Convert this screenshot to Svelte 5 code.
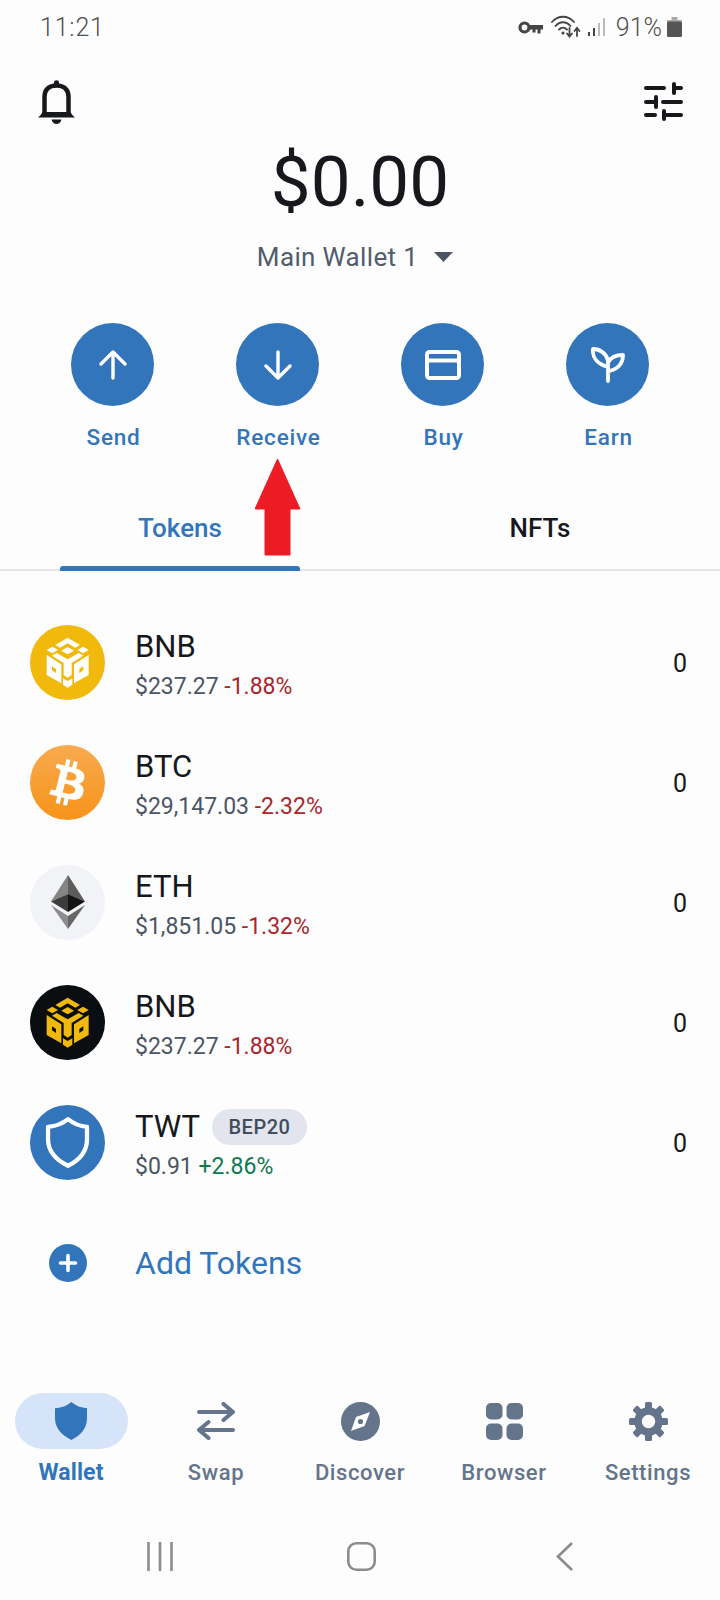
<script>
  const tokens = [
    { sym: 'BNB', icon: 'bnb', price: '$237.27', change: '-1.88%', up: false },
    { sym: 'BTC', icon: 'btc', price: '$29,147.03', change: '-2.32%', up: false },
    { sym: 'ETH', icon: 'eth', price: '$1,851.05', change: '-1.32%', up: false },
    { sym: 'BNB', icon: 'bnbdark', price: '$237.27', change: '-1.88%', up: false },
    { sym: 'TWT', icon: 'twt', price: '$0.91', change: '+2.86%', up: true, chip: 'BEP20' }
  ];
  const actions = ['Send', 'Receive', 'Buy', 'Earn'];
  const teeth = [0, 45, 90, 135, 180, 225, 270, 315];
  const shield = 'M38 13C44 18 50 20.500 58 21V34C58 47 50 56 38 62C26 56 17 47 17 34V21C26 20.500 32 18 38 13Z';
</script>

{#snippet cube(bg, fg)}
  <circle cx="37.500" cy="37.500" r="37.500" fill={bg} />
  <g transform="scale(.3333)" fill={fg}>
    <polygon points="113,38 150,60 136,68 113,55 90,68 76,60" />
    <polygon points="113,66 132,77 113,88 94,77" />
    <polygon points="67,65 84,75 67,85 50,75" />
    <polygon points="159,65 176,75 159,85 142,75" />
    <polygon points="80,84 113,103 146,84 160,92 125,114 125,150 113,158 101,150 101,114 66,92" />
    <path fill-rule="evenodd" d="M50 90L94 118V175L50 150ZM66 124L78 132V144L66 136Z" />
    <path fill-rule="evenodd" d="M176 90L132 118V175L176 150ZM160 124L148 132V144L160 136Z" />
    <polygon points="99,160 113,168 127,160 127,179 113,188 99,179" />
  </g>
{/snippet}

<div class="app">
  <header class="status">
    <span class="clock">11:21</span>
    <div class="status-right">
      <svg class="s-key" width="25" height="13" viewBox="0 0 25 13">
        <circle cx="6.500" cy="6.500" r="4.500" fill="none" stroke="#444" stroke-width="3.200" />
        <path d="M10 4H25V8.500H22.500V12.500H19.500V8.500H17.500V11.500H14.500V8.500H10Z" fill="#444" />
      </svg>
      <svg class="s-wifi" width="30" height="23" viewBox="0 0 30 23">
        <g fill="none" stroke="#444" stroke-width="1.800" stroke-linecap="round">
          <path d="M1 7C7 0 17 0 23 7" />
          <path d="M4.500 11C9 6 15 6 19.500 11" />
          <path d="M8 14.500C10.500 12 13.500 12 16 14.500" />
          <path d="M18.500 13V21M16 18.500L18.500 21.500L21 18.500" />
          <path d="M26 21V13.500M23.500 16L26 13L28.500 16" />
        </g>
        <circle cx="12" cy="18" r="1.600" fill="#444" />
      </svg>
      <svg class="s-sig" width="17" height="18" viewBox="0 0 17 18">
        <rect x="0" y="14" width="2" height="4" fill="#444" />
        <rect x="5" y="10" width="2" height="8" fill="#444" />
        <rect x="10" y="5" width="2" height="13" fill="#bbb" />
        <rect x="15" y="0" width="2" height="18" fill="#bbb" />
      </svg>
      <span class="pct">91%</span>
      <svg class="s-bat" width="15" height="20" viewBox="0 0 15 20">
        <path d="M4.500 0H10.500V3H4.500Z" fill="#aaa" />
        <rect x="0" y="3" width="15" height="2.500" rx="1" fill="#aaa" />
        <rect x="0" y="4.500" width="15" height="15.500" rx="1.500" fill="#555" />
      </svg>
    </div>
  </header>

  <div class="top">
    <svg class="bell" width="37" height="44" viewBox="0 0 37 44">
      <path d="M6.500 34V17C6.500 9.500 11 5.500 18.500 5.500C26 5.500 30.500 9.500 30.500 17V34" fill="none" stroke="#16181c" stroke-width="4.500" />
      <path d="M0 37.500C2 36 3.500 34 4.500 32H32.500C33.500 34 35 36 37 37.500Z" fill="#16181c" />
      <path d="M16 6V2.500C16 -0.500 21 -0.500 21 2.500V6Z" fill="#16181c" />
      <path d="M13.500 39.500H23.500C22.500 43 20.500 44 18.500 44C16.500 44 14.500 43 13.500 39.500Z" fill="#16181c" />
    </svg>
    <svg class="sliders" width="39" height="39" viewBox="0 0 39 39">
      <g fill="none" stroke="#16181c" stroke-width="4" stroke-linecap="round">
        <path d="M2 6H20" /><path d="M30 2V11" /><path d="M30 6H37" />
        <path d="M2 20H10" /><path d="M12 15V25" /><path d="M19 20H37" />
        <path d="M2 33H11" /><path d="M20 29V37" /><path d="M20 33H37" />
      </g>
    </svg>
  </div>

  <div class="balance">$0.00</div>
  <div class="wallet">
    <span>Main Wallet 1</span>
    <svg width="19" height="10" viewBox="0 0 19 10"><path d="M0 0H19L9.500 10Z" fill="#4c5564" /></svg>
  </div>

  <div class="actions">
    {#each actions as a, i}
      <div class="action">
        <div class="circle">
          {#if i === 0}
            <svg width="30" height="30" viewBox="0 0 30 30"><path d="M15 28V2M3 14L15 2L27 14" fill="none" stroke="#fff" stroke-width="3.400" stroke-linecap="round" stroke-linejoin="round" /></svg>
          {:else if i === 1}
            <svg width="30" height="30" viewBox="0 0 30 30"><path d="M15 2V28M3 16L15 28L27 16" fill="none" stroke="#fff" stroke-width="3.400" stroke-linecap="round" stroke-linejoin="round" /></svg>
          {:else if i === 2}
            <svg width="36" height="30" viewBox="0 0 36 30"><rect x="2" y="2" width="32" height="26" rx="2.500" fill="none" stroke="#fff" stroke-width="4" /><path d="M2 10.500H34" stroke="#fff" stroke-width="4" /></svg>
          {:else}
            <svg width="34" height="36" viewBox="0 0 34 36"><path d="M17 34V16C17 8 10 2 2 2C1 10 6 17 17 20M17 24C26 23 32 17 32 8C26 8 20 10 17.500 15" fill="none" stroke="#fff" stroke-width="3.800" stroke-linecap="round" stroke-linejoin="round" /></svg>
          {/if}
        </div>
        <span class="action-label">{a}</span>
      </div>
    {/each}
  </div>

  <div class="tabs">
    <div class="tab active"><span>Tokens</span><i class="bar"></i></div>
    <div class="tab"><span>NFTs</span></div>
  </div>

  <svg class="arrow" width="46" height="97" viewBox="0 0 46 97">
    <path d="M22.500 0L45 50H35V96H10V50H0Z" fill="#ed1c24" stroke="#ed1c24" stroke-width="1" stroke-linejoin="round" />
  </svg>

  <ul class="list">
    {#each tokens as t}
      <li class="row">
        <svg class="coin" width="75" height="75" viewBox="0 0 75 75">
          {#if t.icon === 'bnb'}
            {@render cube('#f0b90b', '#fff')}
          {:else if t.icon === 'bnbdark'}
            {@render cube('#0b0e11', '#f0b90b')}
          {:else if t.icon === 'btc'}
            <defs>
              <linearGradient id="btcg" x1="0" y1="0" x2="0" y2="1">
                <stop offset="0" stop-color="#f8aa4f" />
                <stop offset="1" stop-color="#f7931a" />
              </linearGradient>
            </defs>
            <circle cx="37.500" cy="37.500" r="37.500" fill="url(#btcg)" />
            <g transform="scale(2.344)">
              <path fill="#fff" d="M23.189 14.02c.314-2.096-1.283-3.223-3.465-3.975l.708-2.84-1.728-.43-.69 2.765c-.454-.114-.92-.22-1.385-.326l.695-2.783L15.596 6l-.708 2.839c-.376-.086-.746-.17-1.104-.26l.002-.009-2.384-.595-.46 1.846s1.283.294 1.256.312c.7.175.826.638.805 1.006l-.806 3.235c.048.012.11.03.18.057l-.183-.045-1.13 4.532c-.086.212-.303.531-.793.41.018.025-1.256-.313-1.256-.313l-.858 1.978 2.25.561c.418.105.828.215 1.231.318l-.715 2.872 1.727.43.708-2.84c.472.127.93.245 1.378.357l-.706 2.828 1.728.43.715-2.866c2.948.558 5.164.333 6.097-2.333.752-2.146-.037-3.385-1.588-4.192 1.13-.26 1.98-1.003 2.207-2.538zm-3.95 5.538c-.533 2.147-4.148.986-5.32.695l.95-3.805c1.172.293 4.929.872 4.37 3.11zm.535-5.569c-.487 1.953-3.495.96-4.47.717l.86-3.45c.975.243 4.118.696 3.61 2.733z" />
            </g>
          {:else if t.icon === 'eth'}
            <circle cx="37.500" cy="37.500" r="37.500" fill="#f2f3f6" />
            <polygon points="38,10 21,36.500 38,29" fill="#848484" />
            <polygon points="38,10 55,36.500 38,29" fill="#5c5c5c" />
            <polygon points="38,29 21,36.500 38,47" fill="#3c3c3c" />
            <polygon points="38,29 55,36.500 38,47" fill="#141414" />
            <polygon points="21,40 38,51 38,64" fill="#8c8c8c" />
            <polygon points="55,40 38,51 38,64" fill="#666" />
          {:else}
            <circle cx="37.500" cy="37.500" r="37.500" fill="#3375bb" />
            <path d={shield} transform="translate(1.900 1.875) scale(.95)" fill="none" stroke="#fff" stroke-width="4.500" stroke-linejoin="round" />
          {/if}
        </svg>
        <div class="info">
          <div class="name-line">
            <span class="name">{t.sym}</span>
            {#if t.chip}<span class="chip">{t.chip}</span>{/if}
          </div>
          <div class="price">{t.price} <span class:up={t.up} class="change">{t.change}</span></div>
        </div>
        <span class="qty">0</span>
      </li>
    {/each}
    <li class="row">
      <div class="plus-slot">
        <svg width="38" height="38" viewBox="0 0 38 38">
          <circle cx="19" cy="19" r="19" fill="#3375bb" />
          <path d="M19 11.500V26.500M11.500 19H26.500" stroke="#fff" stroke-width="3.600" stroke-linecap="round" />
        </svg>
      </div>
      <span class="add">Add Tokens</span>
    </li>
  </ul>

  <nav class="nav">
    <div class="nav-item current">
      <div class="nav-icon pill">
        <svg width="32" height="38" viewBox="17 13 41 49" preserveAspectRatio="none"><path d={shield} fill="#3375bb" /></svg>
      </div>
      <span>Wallet</span>
    </div>
    <div class="nav-item">
      <div class="nav-icon">
        <svg width="38" height="38" viewBox="0 0 38 38"><path d="M2 10H36M26.500 2L36 10L26.500 18M36 28H2M11.500 20L2 28L11.500 36" fill="none" stroke="#64748b" stroke-width="4" stroke-linecap="round" stroke-linejoin="round" /></svg>
      </div>
      <span>Swap</span>
    </div>
    <div class="nav-item">
      <div class="nav-icon">
        <svg width="39" height="39" viewBox="0 0 39 39">
          <circle cx="19.500" cy="19.500" r="19.500" fill="#64748b" />
          <polygon points="29,10 23.500,24 10,29 15,15" fill="#fff" />
          <circle cx="19.500" cy="19.500" r="2.600" fill="#64748b" />
        </svg>
      </div>
      <span>Discover</span>
    </div>
    <div class="nav-item">
      <div class="nav-icon">
        <svg width="37" height="37" viewBox="0 0 37 37">
          <rect x="0" y="0" width="16.500" height="16.500" rx="5" fill="#64748b" />
          <rect x="20.500" y="0" width="16.500" height="16.500" rx="5" fill="#64748b" />
          <rect x="0" y="20.500" width="16.500" height="16.500" rx="5" fill="#64748b" />
          <rect x="20.500" y="20.500" width="16.500" height="16.500" rx="5" fill="#64748b" />
        </svg>
      </div>
      <span>Browser</span>
    </div>
    <div class="nav-item">
      <div class="nav-icon">
        <svg width="39" height="39" viewBox="0 0 39 39">
          {#each teeth as a}
            <rect x="16" y="0" width="7" height="10" rx="1.500" fill="#64748b" transform="rotate({a} 19.500 19.500)" />
          {/each}
          <circle cx="19.500" cy="19.500" r="10.500" fill="none" stroke="#64748b" stroke-width="7.500" />
        </svg>
      </div>
      <span>Settings</span>
    </div>
  </nav>

  <div class="sysnav">
    <svg class="sys-recent" width="26" height="29" viewBox="0 0 26 29"><path d="M1.500 0V29M13 0V29M24.500 0V29" stroke="#8c8c8c" stroke-width="2.600" /></svg>
    <svg class="sys-home" width="29" height="29" viewBox="0 0 29 29"><rect x="1.300" y="1.300" width="26.400" height="26.400" rx="8" fill="none" stroke="#8c8c8c" stroke-width="2.600" /></svg>
    <svg class="sys-back" width="17" height="29" viewBox="0 0 17 29"><path d="M16 1L2 14.500L16 28" fill="none" stroke="#8c8c8c" stroke-width="2.600" /></svg>
  </div>
</div>

<style>
  :global(body) { margin: 0; background: #fdfdfe; }
  .app {
    position: relative;
    width: 720px;
    height: 1600px;
    overflow: hidden;
    background: #fdfdfe;
    font-family: Roboto, "Liberation Sans", sans-serif;
    color: #16181c;
  }
  .status {
    height: 54px;
    display: flex;
    align-items: center;
    justify-content: space-between;
    padding: 0 38px 0 40px;
    color: #505050;
    font-size: 25px;
    font-weight: 300;
  }
  .clock { letter-spacing: .8px; }
  .status-right { display: flex; align-items: center; }
  .s-wifi { margin-left: 8px; margin-top: -2px; }
  .s-sig { margin-left: 7px; }
  .pct { margin-left: 11px; }
  .s-bat { margin-left: 5px; }

  .top {
    display: flex;
    justify-content: space-between;
    align-items: flex-start;
    margin-top: 26px;
    padding: 0 37px 0 38px;
    height: 44px;
  }
  .sliders { margin-top: 2px; }
  .balance {
    margin-top: 16px;
    height: 84px;
    line-height: 84px;
    text-align: center;
    font-size: 71px;
  }
  .wallet {
    margin-top: 16px;
    height: 34px;
    display: flex;
    justify-content: center;
    align-items: center;
    gap: 16px;
    padding-right: 10px;
    font-size: 26px;
    letter-spacing: .35px;
    line-height: 34px;
    color: #515c6c;
  }
  .actions {
    display: grid;
    grid-template-columns: repeat(4, 165px);
    margin-top: 49px;
    padding-left: 30px;
  }
  .action { display: flex; flex-direction: column; align-items: center; gap: 16px; }
  .circle {
    width: 83px;
    height: 83px;
    border-radius: 50%;
    background: #3375bb;
    display: flex;
    align-items: center;
    justify-content: center;
  }
  .action-label {
    font-size: 22.500px;
    line-height: 30px;
    font-weight: 500;
    letter-spacing: .8px;
    padding-left: 2px;
    color: #3375bb;
  }
  .tabs {
    display: grid;
    grid-template-columns: 1fr 1fr;
    height: 119px;
    box-sizing: border-box;
    border-bottom: 2px solid #e4e6ea;
  }
  .tab {
    display: flex;
    flex-direction: column;
    align-items: center;
    font-size: 26px;
    font-weight: 500;
    line-height: 30px;
    padding-top: 61px;
    position: relative;
  }
  .tab.active { color: #3375bb; }
  .bar {
    position: absolute;
    left: 60px;
    bottom: -2px;
    width: 240px;
    height: 5px;
    border-radius: 3px 3px 0 0;
    background: #3375bb;
  }
  .arrow { position: absolute; left: 254.500px; top: 459px; }

  .list { list-style: none; margin: 54px 0 0; padding: 0 33px 0 30px; display: flex; flex-direction: column; gap: 45px; }
  .row { display: flex; align-items: center; height: 75px; }
  .coin { flex: none; }
  .info { margin-left: 30px; flex: 1; padding-top: 5px; }
  .name-line { display: flex; align-items: center; gap: 12px; }
  .name { font-size: 31px; line-height: 36px; }
  .chip {
    display: flex;
    align-items: center;
    justify-content: center;
    width: 95px;
    height: 36px;
    border-radius: 18px;
    background: #e2e5ee;
    color: #434c5a;
    font-size: 20px;
    font-weight: 500;
    letter-spacing: .5px;
  }
  .price { margin-top: 8px; font-size: 23px; line-height: 28px; color: #4b5563; white-space: pre; }
  .change { color: #a8262c; }
  .change.up { color: #0d7a50; }
  .qty { font-size: 25px; line-height: 30px; padding-top: 2px; }
  .plus-slot { width: 75px; display: flex; justify-content: center; }
  .add { margin-left: 30px; font-size: 32px; color: #3375bb; }

  .nav { display: grid; grid-template-columns: repeat(5, 144px); margin-top: 93px; }
  .nav-item {
    display: flex;
    flex-direction: column;
    align-items: center;
    gap: 9px;
    font-size: 22px;
    line-height: 30px;
    font-weight: 500;
    letter-spacing: .6px;
    color: #64748b;
  }
  .nav-icon { height: 56px; display: flex; align-items: center; justify-content: center; }
  .pill { width: 113px; border-radius: 28px; background: #d6e4f9; }
  .current { color: #3375bb; font-weight: 700; letter-spacing: .1px; font-size: 23px; margin: 0 1px 0 -1px; }

  .sysnav { position: relative; height: 29px; margin-top: 54px; display: flex; }
  .sys-recent { margin-left: 147px; }
  .sys-home { margin-left: 174px; }
  .sys-back { margin-left: 180px; }
</style>
